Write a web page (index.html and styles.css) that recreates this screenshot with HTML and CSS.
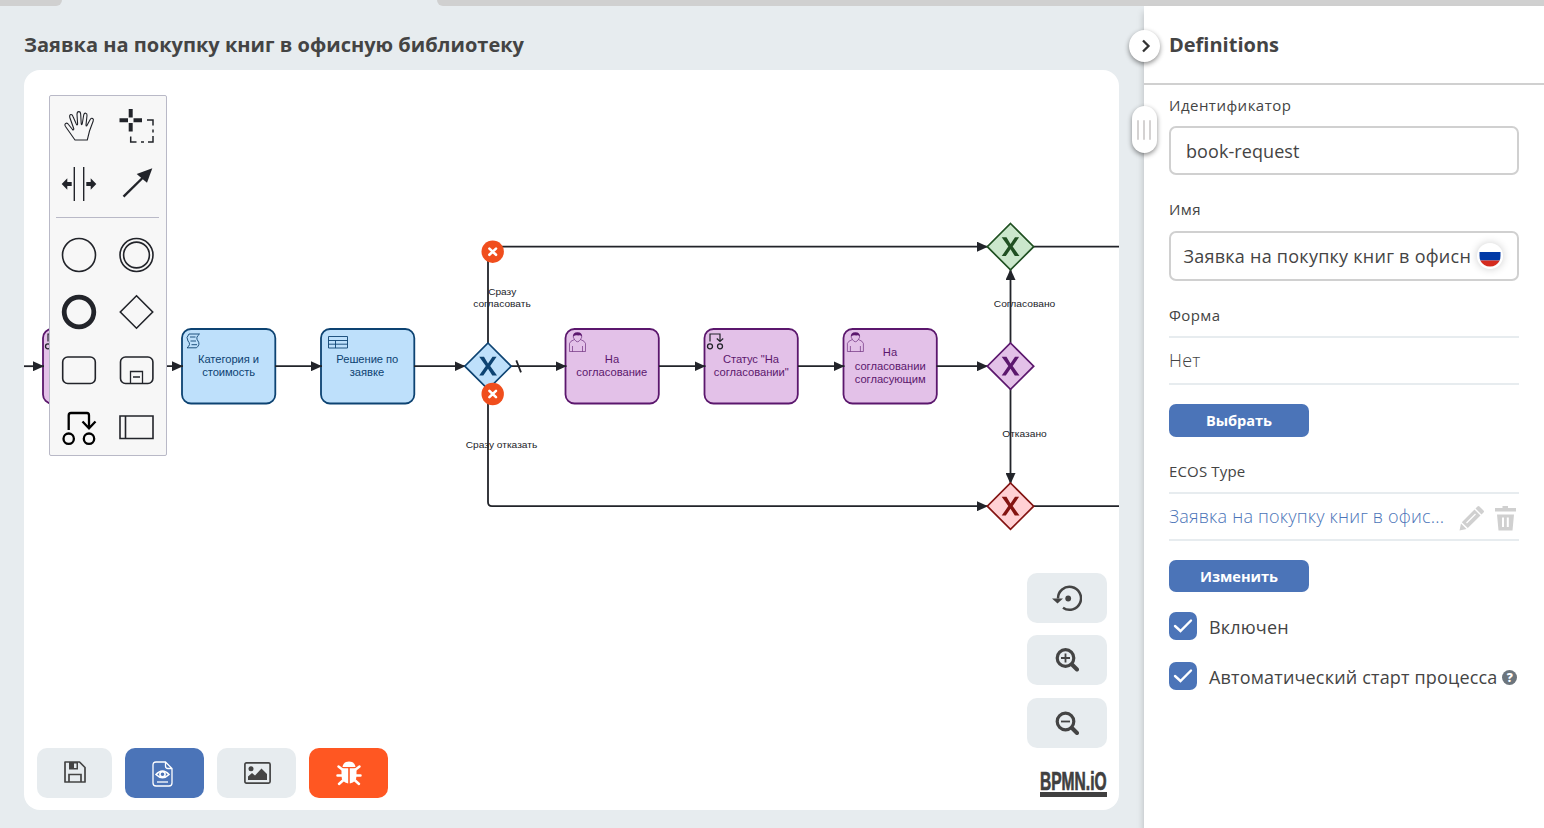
FILE: index.html
```html
<!DOCTYPE html>
<html lang="ru">
<head>
<meta charset="utf-8">
<title>Заявка на покупку книг в офисную библиотеку</title>
<link rel="stylesheet" href="styles.css">
</head>
<body>
<div class="tabs"><div class="tab tab-left"></div><div class="tab tab-right"></div></div>
<div class="layout">
  <main class="editor">
    <h1 class="title"><svg width="520" height="34"><text x="0" y="23.500" textLength="500" lengthAdjust="spacingAndGlyphs">Заявка на покупку книг в офисную библиотеку</text></svg></h1>
    <div class="canvas">
      <svg class="diagram" viewBox="24 70 1095 740">
        <defs>
          <marker id="arrow" viewBox="0 0 11 10" refX="11" refY="5" markerWidth="11" markerHeight="10" markerUnits="userSpaceOnUse" orient="auto"><path d="M0 0L11 5L0 10z" fill="#22242a"/></marker>
          <g id="user"><path d="M-8 9.500V1.500Q-7.500-1-3-2.500Q0 2 3-2.500Q7.500-1 8 1.500V9.500zM-5 9.500V4M5 9.500V4" fill="none" stroke-width=".6"/><path d="M-3-2.500Q-5-5-4-7Q0-10 4-7Q5-5 3-2.500" fill="none" stroke-width=".6"/><path d="M-4.300-5.500Q-5-9.500 0-9.700Q5-9.500 4.300-5.500Q3-7.500 1-6.500Q-2-7.500-4.300-5.500z" fill="#5b176d" stroke="none"/></g>
          <g id="status" fill="none" stroke="#22242a"><circle cx="-5" cy="5.800" r="2.500" stroke-width="1.300"/><circle cx="5" cy="5.800" r="2.500" stroke-width="1.300"/><path d="M-5 1V-6.500H5V.5M1.800-2L5 1L8.200-2" stroke-width="1.200"/></g>
          <path id="diamond" d="M0-23.200L23.200 0L0 23.200L-23.200 0z" stroke-width="1.700"/>
          <path id="cross" d="M-8.800-9.400H-4L0-2.800L4.500-9.400H8.600L2.200-.2L9 9.400H4.300L0 2.500L-4.700 9.400H-8.800L-2.200-.1z"/>
          <g id="error"><circle r="11.200" fill="#f04e1d"/><path d="M-3.300-3.100L3.300 3.100M3.300-3.100L-3.300 3.100" stroke="#fff" stroke-width="2.600" stroke-linecap="round"/></g>
        </defs>
        <g class="tasks purple">
          <rect x="43" y="329" width="93.300" height="74.500" rx="9"/>
          <rect x="565.500" y="329" width="93.300" height="74.500" rx="9"/>
          <rect x="704.500" y="329" width="93.300" height="74.500" rx="9"/>
          <rect x="843.500" y="329" width="93.300" height="74.500" rx="9"/>
          <use href="#user" x="577.500" y="342"/><use href="#user" x="855.400" y="342"/>
        </g>
        <use href="#status" x="53" y="340.500"/><use href="#status" x="715" y="340.500"/>
        <g class="tasks blue">
          <rect x="182" y="329" width="93.300" height="74.500" rx="9"/>
          <rect x="321" y="329" width="93.300" height="74.500" rx="9"/>
          <path class="thin" d="M189 334H199.500Q195 337.500 198 341Q200.500 344.500 196.500 347.800H187Q191.500 344.500 188 341Q185.500 337.500 189 334zM190 337H195.500M190.500 341H196M191.500 344.700H197"/>
          <path class="thin" d="M328.500 336.500H347.500V348H328.500zM328.500 340.500H347.500M328.500 344.200H347.500M335.500 340.500V348"/>
        </g>
        <g class="edges">
          <path d="M24 366.200H44" marker-end="url(#arrow)"/>
          <path d="M136 366.200H183" marker-end="url(#arrow)"/>
          <path d="M275 366.200H322" marker-end="url(#arrow)"/>
          <path d="M414 366.200H465.500" marker-end="url(#arrow)"/>
          <path d="M511 366.200H566.500" marker-end="url(#arrow)"/>
          <path d="M659 366.200H705.500" marker-end="url(#arrow)"/>
          <path d="M798 366.200H844.500" marker-end="url(#arrow)"/>
          <path d="M936.500 366.200H988" marker-end="url(#arrow)"/>
          <path d="M488 343V251Q488 246.700 492 246.700H988" marker-end="url(#arrow)"/>
          <path d="M488 389V502Q488 506.200 492 506.200H988" marker-end="url(#arrow)"/>
          <path d="M1010.500 343V269" marker-end="url(#arrow)"/>
          <path d="M1010.500 389V484" marker-end="url(#arrow)"/>
          <path d="M1033.500 246.700H1119M1033.500 506.200H1119"/>
          <path d="M516.300 360.300L521 372.300" stroke-width="1.800"/>
        </g>
        <g fill="#bbdefb" stroke="#0d4372" fill-opacity=".95"><use href="#diamond" x="488" y="366.200"/></g>
        <g fill="#e1bee7" stroke="#5b176d" fill-opacity=".95"><use href="#diamond" x="1010.500" y="366.200"/></g>
        <g fill="#c8e6c9" stroke="#205022" fill-opacity=".95"><use href="#diamond" x="1010.500" y="246.700"/></g>
        <g fill="#ffcdd2" stroke="#831311" fill-opacity=".95"><use href="#diamond" x="1010.500" y="506.200"/></g>
        <use href="#cross" x="488" y="366.200" fill="#0d4372"/>
        <use href="#cross" x="1010.500" y="366.200" fill="#5b176d"/>
        <use href="#cross" x="1010.500" y="246.700" fill="#205022"/>
        <use href="#cross" x="1010.500" y="506.200" fill="#831311"/>
        <g class="names" fill="#0d4372">
          <text x="228.500" y="363" textLength="61">Категория и</text><text x="228.700" y="376" textLength="53">стоимость</text>
          <text x="367.300" y="363" textLength="62">Решение по</text><text x="367" y="376" textLength="34.500">заявке</text>
        </g>
        <g class="names" fill="#5b176d">
          <text x="612" y="363" textLength="14.500">На</text><text x="611.800" y="376" textLength="71">согласование</text>
          <text x="751" y="363" textLength="56">Статус "На</text><text x="751.300" y="376" textLength="75">согласовании"</text>
          <text x="890" y="356" textLength="14.500">На</text><text x="890.200" y="370" textLength="71">согласовании</text><text x="890.200" y="383" textLength="71">согласующим</text>
        </g>
        <g class="names small" fill="#22242a">
          <text x="502.200" y="295" textLength="28" lengthAdjust="spacingAndGlyphs">Сразу</text><text x="502" y="307" textLength="57.500" lengthAdjust="spacingAndGlyphs">согласовать</text>
          <text x="501.500" y="448" textLength="71.500" lengthAdjust="spacingAndGlyphs">Сразу отказать</text>
          <text x="1024.500" y="307" textLength="61.500" lengthAdjust="spacingAndGlyphs">Согласовано</text><text x="1024.500" y="437" textLength="44.500" lengthAdjust="spacingAndGlyphs">Отказано</text>
        </g>
        <use href="#error" x="492.700" y="251.700"/><use href="#error" x="492.700" y="394"/>
      </svg>

      <div class="palette">
        <svg class="tool" viewBox="-29 -29.500 58 58"><path d="M-4 13.500L-13.500 0C-15.500-3-12-4.500-10.500-2L-6.500 3C-5.500 4-5 3-5.300 2L-9.200-9C-10-12.500-7-13-6-10L-2.700-2.500C-2-1-1.300-1.500-1.400-3L-2-12C-2-15.800 1.600-15.800 1.700-12L2.200-3C2.300-1.500 3-1.500 3.300-3L4.700-11.500C5.500-14.500 8.300-13.500 8-11L7-1.500C7-.2 7.700-.2 8.200-1.500L11.200-7C13-9.500 15-7.500 14.200-5.500L10.500 4.500L8.300 13.500z" stroke-width="1.100"/></svg>
        <svg class="tool" viewBox="-28.500 -29.500 58 58"><path d="M-17-6.300H-8.500M-3-6.300H5.500M-5.800-17.500V-9M-5.800-3.500V5" stroke-width="4"/><path d="M10.500-6.500H16.500V-1M16.500 3V6M16.500 9.500V15.500H11.500M7.500 15.500H4.500M0 15.500H-5.800V10" stroke-width="1.500"/></svg>
        <svg class="tool" viewBox="-29 -29 58 58"><path d="M-4.700-17V17M4.700-17V17" stroke-width="1.400"/><path class="solid" d="M-17.300 0L-11.700-5.700V-2H-7.300V2H-11.700V5.700zM17.300 0L11.700-5.700V-2H7.300V2H11.700V5.700z"/></svg>
        <svg class="tool" viewBox="-28.500 -29 58 58"><path d="M-13 12.700L7-7" stroke-width="2.400"/><path class="solid" d="M15.800-15.700L10.500-1.300L6-5L.2-10z"/></svg>
        <hr class="divider">
        <svg class="tool" viewBox="-29 -29 58 58"><circle r="16.500"/></svg>
        <svg class="tool" viewBox="-28.500 -29 58 58"><circle r="16.500"/><circle r="12.900"/></svg>
        <svg class="tool" viewBox="-29 -28 58 58"><circle r="14.800" stroke-width="4.800"/></svg>
        <svg class="tool" viewBox="-28.500 -28 58 58"><path d="M0-16.200L16.200 0L0 16.200L-16.200 0z"/></svg>
        <svg class="tool" viewBox="-29 -29 58 58"><rect x="-16.300" y="-13" width="32.600" height="26.500" rx="5"/></svg>
        <svg class="tool" viewBox="-28.500 -29 58 58"><rect x="-16" y="-13" width="32.400" height="26.500" rx="5"/><path d="M-6 13.500V1.500H6V13.500M-3.500 7H3.500" stroke-width="1.300"/></svg>
        <svg class="tool black" viewBox="-29 -28.500 58 58"><circle cx="-10.300" cy="11.200" r="5.200"/><circle cx="10" cy="11.200" r="5.200"/><path d="M-10.300 2.500V-12Q-10.300-14.500-8-14.500H8Q10-14.500 10-12V.5M3.500-6L10 .8L16.500-6"/></svg>
        <svg class="tool" viewBox="-28.500 -28.500 58 58"><path d="M-16.500-11.500H16.500V11H-16.500zM-11-11.500V11"/></svg>
      </div>

      <div class="actions">
        <button class="btn save"><svg width="22" height="22" viewBox="0 0 22 22" fill="none" stroke="#444" stroke-width="1.700"><path d="M1 1H15.500L21 6.500V21H1z" stroke-linejoin="round"/><path d="M5 21V13.500H17V21"/><path d="M5 1H14V8.500H5z" fill="#444" stroke="none"/><path d="M10 2.500H12.500V7H10z" fill="#e7ecef" stroke="none"/></svg></button>
        <button class="btn primary"><svg width="21" height="26" viewBox="0 0 21 26" fill="none" stroke="#fff" stroke-width="1.300"><path d="M13.500 1H4Q1 1 1 4V22Q1 25 4 25H17Q20 25 20 22V7.500zM13.500 1V5Q13.500 7.500 16 7.500H20"/><path d="M4 13.500Q10.500 6.500 17 13.500Q10.500 20 4 13.500z" stroke-width="1.600"/><circle cx="10.500" cy="13.300" r="2.600" stroke-width="1.600"/><path d="M5 21H16"/></svg></button>
        <button class="btn"><svg class="picture" width="27" height="22" viewBox="0 0 27 22" fill="#444"><rect x=".9" y=".9" width="25.200" height="20.200" rx="1.500" fill="none" stroke="#444" stroke-width="1.700"/><circle cx="7" cy="6.700" r="2.500"/><path d="M4 18V14.500L8 11L11 13.500L17.500 6.500L23 12V18z"/></svg></button>
        <button class="btn danger"><svg width="26" height="25" viewBox="0 0 26 25" fill="#fff"><path d="M6.500 6C7 2 10 .5 13 .5S19 2 19.500 6z"/><path d="M5.500 7.300H12.200V22.500Q5.500 21 5.500 15zM13.800 7.300H20.500V15Q20.500 21 13.800 22.500z"/><path d="M2.500 5.500L7 9M23.500 5.500L19 9M1.500 14.500H7M24.500 14.500H19M3 23L8 18.500M23 23L18 18.500" stroke="#fff" stroke-width="2.500" stroke-linecap="round"/></svg></button>
      </div>

      <div class="zooms">
        <button class="btn"><svg width="30" height="28" viewBox="0 -1 30 28" fill="none"><path d="M6 14A11.500 11.500 0 1 1 11 23.300" stroke="#444" stroke-width="2.500" transform="translate(0 -.5)"/><path d="M0 13.500H11L5.500 18.500z" fill="#444"/><circle cx="16.200" cy="13.500" r="2.900" fill="#444"/></svg></button>
        <button class="btn"><svg width="24" height="24" viewBox="0 0 24 24" fill="none" stroke="#444"><circle cx="10.500" cy="10" r="8.300" stroke-width="3.200"/><path d="M17 16.500L22 21.500" stroke-width="4" stroke-linecap="round"/><path d="M6 10H15M10.500 5.500V14.500" stroke-width="1.800"/></svg></button>
        <button class="btn last"><svg width="24" height="24" viewBox="0 -.5 24 24" fill="none" stroke="#444"><circle cx="10.500" cy="10" r="8.300" stroke-width="3.200"/><path d="M17 16.500L22 21.500" stroke-width="4" stroke-linecap="round"/><path d="M6 10H15" stroke-width="1.800"/></svg></button>
      </div>
      <svg class="logo" width="72" height="36" viewBox="0 -8 72 36"><text transform="translate(0 19.500) scale(.6 1)" textLength="111" lengthAdjust="spacingAndGlyphs">BPMN.iO</text><rect x="0" y="22" width="67" height="5"/></svg>
    </div>
  </main>

  <aside class="panel">
    <button class="toggle"><svg width="10" height="14" viewBox="0 0 10 14"><path d="M2 1.500L7.500 7L2 12.500" fill="none" stroke="#333" stroke-width="2.300"/></svg></button>
    <div class="grip"><i></i><i></i><i></i></div>
    <header class="head">Definitions</header>
    <div class="form">
      <div class="label first">Идентификатор</div>
      <div class="input id">book-request</div>
      <div class="label second">Имя</div>
      <div class="input name"><span class="name-text">Заявка на покупку книг в офисн</span><svg class="flag" width="26" height="26" viewBox="0 0 26 26"><circle cx="13" cy="13" r="12.500" fill="#fff"/><path d="M2.500 9H23.500V13Q23.500 16 22.500 17.500H3.500Q2.500 16 2.500 13z" fill="#0039a6"/><path d="M3.200 17.500H22.800Q19.500 23.500 13 23.500T3.200 17.500z" fill="#d52b1e"/></svg></div>
      <div class="label">Форма</div>
      <div class="value"><span class="text">Нет</span></div>
      <button class="choose">Выбрать</button>
      <div class="label type">ECOS Type</div>
      <div class="value"><span class="text link">Заявка на покупку книг в офис...</span>
        <svg class="pencil" width="26" height="26" viewBox="0 0 26 26" fill="#d0d0d0"><path d="M16.500 3.500L18.500 1.500Q19.500.5 20.500 1.500L24.500 5.500Q25.500 6.500 24.500 7.500L22.500 9.500zM15.500 4.500L21.500 10.500L8.800 23L2.800 17.200zM2 18.500L7.500 24L.5 25.500z"/><path d="M7.500 18L16.500 9" stroke="#fff" stroke-width="1.300"/></svg>
        <svg class="trash" width="21" height="26" viewBox="0 0 21 26" fill="#d0d0d0"><path d="M0 3H7.500V1H13V3H21V6.500H0zM2 9.500H19L17.500 25.500H3.500z"/><path d="M8 12.500V22M12.800 12.500V22" stroke="#fff" stroke-width="2"/></svg>
      </div>
      <button class="choose change">Изменить</button>
      <div class="check"><span class="box"><svg width="20" height="16" viewBox="0 0 20 16"><path d="M2 8L7.500 13L18 2.500" fill="none" stroke="#fff" stroke-width="2.400" stroke-linecap="round"/></svg></span><span>Включен</span></div>
      <div class="check"><span class="box"><svg width="20" height="16" viewBox="0 0 20 16"><path d="M2 8L7.500 13L18 2.500" fill="none" stroke="#fff" stroke-width="2.400" stroke-linecap="round"/></svg></span><span>Автоматический старт процесса</span><span class="help">?</span></div>
    </div>
  </aside>
</div>
</body>
</html>
```

FILE: styles.css
```css
* { box-sizing: border-box; }
body { margin: 0; width: 1544px; height: 828px; overflow: hidden; background: #e7ecef; color: #444; font-family: "Open Sans", sans-serif; }
svg { display: block; flex: none; }
button { border: 0; padding: 0; font: inherit; }
.tabs { height: 6px; display: flex; justify-content: space-between; }
.tab { background: #d0d0d0; }
.tab-left { width: 62px; border-bottom-right-radius: 8px; }
.tab-right { width: 1107px; border-bottom-left-radius: 8px; }
.layout { display: flex; height: 822px; }
.editor { width: 1144px; padding: 22px 25px 18px 24px; }
.title { margin: 0; height: 42px; font-size: 20px; font-weight: 700; fill: #444; }
.canvas { position: relative; height: 740px; border-radius: 16px; background: #fff; overflow: hidden; }
.diagram { width: 1095px; height: 740px; }
.tasks rect { stroke-width: 1.8; fill-opacity: .95; }
.blue { fill: #bbdefb; stroke: #0d4372; }
.purple { fill: #e1bee7; stroke: #5b176d; }
.thin { fill: none; stroke-width: .9; }
.edges { fill: none; stroke: #22242a; stroke-width: 1.8; }
.names { font: 11.2px "Liberation Sans", sans-serif; text-anchor: middle; }
.small { font-size: 9.5px; }

.palette { position: absolute; left: 25px; top: 25px; width: 118px; height: 361px; padding: 1px 1px 0 0; display: grid; grid-template-columns: 58px 57px; grid-template-rows: 58px 58px 13px 58px 57px 58px 57px; border: 1px solid #b9b9c7; border-radius: 2px; background: #f7f7f7; }
.tool { width: 58px; height: 58px; fill: none; stroke: #22242a; stroke-width: 1.6; }
.tool .solid { fill: #22242a; stroke: none; }
.black { stroke: #000; stroke-width: 2.3; }
.divider { grid-column: 1 / 3; width: 103px; height: 1px; margin: 4px 0 0 6px; border: 0; background: #b9b9c7; }

.btn { height: 50px; width: 79px; display: flex; align-items: center; justify-content: center; border-radius: 10px; background: #e7ecef; }
.actions { position: absolute; left: 13px; bottom: 12px; display: flex; gap: 13px; }
.save { width: 75px; padding-bottom: 2px; }
.primary { background: #4b74b8; padding: 2px 4px 0 0; }
.picture { margin-left: 2px; }
.danger { background: #ff5722; }
.zooms { position: absolute; right: 12px; top: 503px; display: grid; gap: 12px; }
.zooms .btn { width: 80px; }
.zooms .last { margin-top: 1px; }
.logo { position: absolute; left: 1016px; top: 692px; fill: #404040; font: 700 26px "Liberation Sans", sans-serif; }
.logo text { stroke: #404040; stroke-width: .7; }

.panel { position: relative; width: 400px; background: #fff; box-shadow: 0 6px 7px rgba(0, 0, 0, .22); }
.toggle { position: absolute; left: -15px; top: 24px; width: 31px; height: 32px; display: flex; align-items: center; justify-content: center; padding: 0 0 1px 3px; border-radius: 50%; background: #fff; box-shadow: 0 2px 5px rgba(0, 0, 0, .45); }
.grip { position: absolute; left: -12px; top: 100px; width: 25px; height: 47px; display: flex; gap: 3.5px; align-items: center; justify-content: center; padding-right: 1px; border-radius: 13px; background: #fff; box-shadow: 0 2px 5px rgba(0, 0, 0, .45); }
.grip i { width: 2.5px; height: 20px; border-radius: 1px; background: #d4d2d2; }
.head { height: 79px; padding-left: 25px; border-bottom: 2px solid #d0d0d0; font-size: 20px; font-weight: 700; line-height: 78px; }
.form { display: flex; flex-direction: column; align-items: flex-start; padding: 0 25px; font-size: 18px; letter-spacing: .17px; white-space: nowrap; }
.label { height: 55px; padding-top: 14px; font-size: 15px; font-weight: 500; letter-spacing: .4px; line-height: 41px; }
.label.first { height: 41px; padding: 0; letter-spacing: .48px; }
.label.second { height: 56px; padding-top: 13px; line-height: 43px; }
.label.type { letter-spacing: .15px; }
.input { width: 350px; height: 49px; padding: 0 15px; border: 2px solid #d0d0d0; border-radius: 7px; letter-spacing: .08px; line-height: 46px; }
.input.name { height: 50px; padding: 0 14px 0 12.5px; display: flex; align-items: center; justify-content: space-between; letter-spacing: .25px; }
.flag { border-radius: 50%; box-shadow: 0 0 8px rgba(0, 0, 0, .2); }
.value { width: 350px; height: 49px; display: flex; align-items: center; border: solid #e7ecef; border-width: 2px 0; font-weight: 300; letter-spacing: .2px; }
.text { padding-bottom: 2px; }
.link { width: 290px; color: #4b74b8; }
.pencil { margin-top: 2px; }
.trash { margin: 2px 0 0 10px; }
.choose { width: 140px; height: 33px; margin-top: 19px; border-radius: 7px; background: #4b74b8; color: #fff; font-size: 14.6px; font-weight: 700; letter-spacing: -.05px; line-height: 32px; padding-bottom: 1px; }
.change { height: 32px; }
.check { height: 28px; margin-top: 20px; display: flex; align-items: center; line-height: 28px; }
.check + .check { margin-top: 22px; }
.box { width: 28px; height: 28px; margin-right: 12px; display: flex; align-items: center; justify-content: center; border-radius: 7px; background: #4b74b8; }
.check > span:nth-child(2) { padding-top: 1px; }
.help { width: 15px; height: 15px; margin: 3px 0 0 5px; border-radius: 50%; background: #6c757d; color: #fff; font-size: 12px; font-weight: 800; line-height: 15px; text-align: center; }
```
